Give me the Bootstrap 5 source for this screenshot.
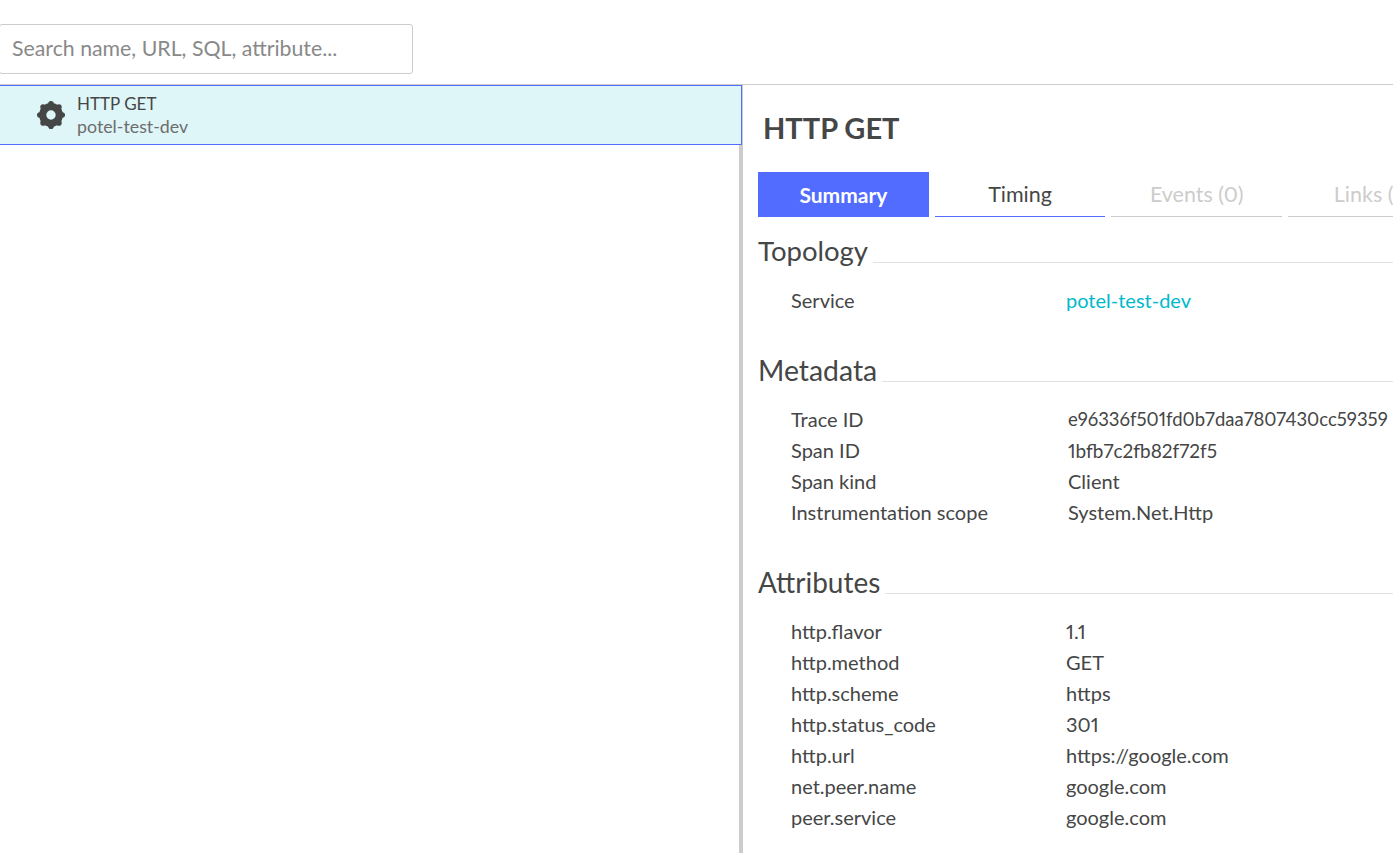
<!DOCTYPE html>
<html lang="en">
<head>
<meta charset="utf-8">
<title>Trace</title>
<link rel="stylesheet" href="https://cdn.jsdelivr.net/npm/bootstrap@5.3.0/dist/css/bootstrap.min.css">
<style>
html,body{height:100%;overflow:hidden}
body{font-family:"Lato","Liberation Sans",sans-serif;color:#454646;background:#fff;font-size:18px;font-variant-numeric:proportional-nums}
.topbar{height:85px;border-bottom:1px solid #ccc;padding-top:24px}
.searchbox{width:414px;height:50px;margin-left:-1px;border:1px solid #ccc;border-radius:3px;padding:0 0 0 12px;font-size:21.3px;color:#898989;display:flex;align-items:center}
.panes{height:768px}
.leftpane{width:739px}
.splitter{width:4px;background:#ccc}
.rightpane{flex:1;min-width:0;padding:0 0 0 15px;overflow:hidden}
.spanrow{height:60px;background:#dff6f9;border:1px solid #526cff;border-left:0;margin-right:-3px;padding:0 0 0 37px;gap:12px;position:relative}
.spanname{font-size:17px;line-height:22px}
.spansvc{font-size:17.8px;line-height:22px;color:#6d6d6d}
.spantitle{font-size:29px;font-weight:700;line-height:36px;margin:25px 0 26px 5px;color:#454646}
.tabstrip{gap:6px;width:800px}
.tabitem{width:170.7px;height:45px;font-size:21.5px;display:flex;align-items:center;justify-content:center;border-bottom:1px solid #ccc;color:#ccc;flex:none}
.tabitem.on{background:#526cff;color:#fff;font-weight:700;font-size:21px;border:0}
.tabitem.live{color:#454646;border-bottom-color:#526cff}
.sechead{display:flex;align-items:flex-end;gap:5px;font-size:27.5px;line-height:36px}
.sechead::after{content:"";flex:1;border-bottom:1px solid #e2e2e2;margin-bottom:6px}
.sechead.meta{font-size:28.4px}
.sechead.attr{font-size:28px}
.kvlist{margin:16px 0 0;padding-left:33px;font-size:20px;line-height:31px}
.kvrow{display:flex}
.kvrow dt{width:275px;font-weight:400;flex:none;margin:0}
.kvrow dd{margin:0;white-space:nowrap}
.metaval{padding-left:2px}
.traceval{font-size:18.5px}
.spanval{font-size:19px}
.svc-link{color:#00b9cc;text-decoration:none}
.toposec{margin-top:16px}
.gapsec{margin-top:36px}
</style>
</head>
<body>
<div class="topbar"><div class="searchbox">Search name, URL, SQL, attribute...</div></div>
<div class="panes d-flex">
  <div class="leftpane">
    <div class="spanrow d-flex align-items-center">
      <svg width="28" height="28" viewBox="0 0 28 28" aria-hidden="true"><g fill="#454646"><circle cx="14" cy="2.800" r="2.800"/><circle cx="25.200" cy="14" r="2.800"/><circle cx="14" cy="25.200" r="2.800"/><circle cx="2.800" cy="14" r="2.800"/><circle cx="21.920" cy="6.080" r="2.800"/><circle cx="21.920" cy="21.920" r="2.800"/><circle cx="6.080" cy="21.920" r="2.800"/><circle cx="6.080" cy="6.080" r="2.800"/></g><circle cx="14" cy="14" r="8.300" fill="none" stroke="#454646" stroke-width="7.200"/></svg>
      <div><div class="spanname">HTTP GET</div><div class="spansvc">potel-test-dev</div></div>
    </div>
  </div>
  <div class="splitter"></div>
  <div class="rightpane">
    <div class="spantitle">HTTP GET</div>
    <div class="tabstrip d-flex">
      <div class="tabitem on">Summary</div>
      <div class="tabitem live">Timing</div>
      <div class="tabitem">Events (0)</div>
      <div class="tabitem">Links (0)</div>
    </div>
    <div class="sechead toposec">Topology</div>
    <dl class="kvlist">
      <div class="kvrow"><dt>Service</dt><dd><a class="svc-link" href="#">potel-test-dev</a></dd></div>
    </dl>
    <div class="sechead meta gapsec">Metadata</div>
    <dl class="kvlist">
      <div class="kvrow"><dt>Trace ID</dt><dd class="metaval traceval">e96336f501fd0b7daa7807430cc59359</dd></div>
      <div class="kvrow"><dt>Span ID</dt><dd class="metaval spanval">1bfb7c2fb82f72f5</dd></div>
      <div class="kvrow"><dt>Span kind</dt><dd class="metaval">Client</dd></div>
      <div class="kvrow"><dt>Instrumentation scope</dt><dd class="metaval">System.Net.Http</dd></div>
    </dl>
    <div class="sechead attr gapsec">Attributes</div>
    <dl class="kvlist">
      <div class="kvrow"><dt>http.flavor</dt><dd>1.1</dd></div>
      <div class="kvrow"><dt>http.method</dt><dd>GET</dd></div>
      <div class="kvrow"><dt>http.scheme</dt><dd>https</dd></div>
      <div class="kvrow"><dt>http.status_code</dt><dd>301</dd></div>
      <div class="kvrow"><dt>http.url</dt><dd>https://google.com</dd></div>
      <div class="kvrow"><dt>net.peer.name</dt><dd>google.com</dd></div>
      <div class="kvrow"><dt>peer.service</dt><dd>google.com</dd></div>
    </dl>
  </div>
</div>
<script src="https://cdn.jsdelivr.net/npm/bootstrap@5.3.0/dist/js/bootstrap.bundle.min.js"></script>
</body>
</html>
